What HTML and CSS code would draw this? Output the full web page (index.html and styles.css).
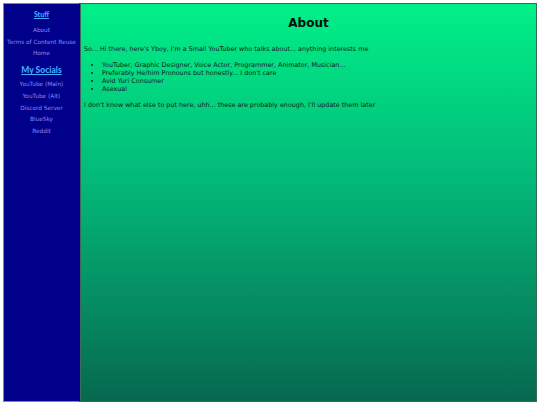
FILE: index.html
```html
<!DOCTYPE html>
<html>
<head>
<meta charset="utf-8">
<link rel="stylesheet" href="styles.css">
</head>
<body>
<div class="frame">
  <nav class="sidebar">
    <h3 class="side-head">Stuff</h3>
    <a class="side-link">About</a>
    <a class="side-link">Terms of Content Reuse</a>
    <a class="side-link">Home</a>
    <h3 class="side-head big">My Socials</h3>
    <a class="side-link">YouTube (Main)</a>
    <a class="side-link">YouTube (Alt)</a>
    <a class="side-link">Discord Server</a>
    <a class="side-link">BlueSky</a>
    <a class="side-link">Reddit</a>
  </nav>
  <main class="content">
    <h1 class="title">About</h1>
    <p class="para first">So... Hi there, here's Yboy, I'm a Small YouTuber who talks about... anything interests me</p>
    <ul class="list">
      <li>YouTuber, Graphic Designer, Voice Actor, Programmer, Animator, Musician...</li>
      <li>Preferably He/him Pronouns but honestly... I don't care</li>
      <li>Avid Yuri Consumer</li>
      <li>Asexual</li>
    </ul>
    <p class="para">I don't know what else to put here, uhh... these are probably enough, I'll update them later</p>
  </main>
</div>
</body>
</html>
```
FILE: styles.css
```css
html, body {
  margin: 0;
  padding: 0;
  background: #ffffff;
}
body {
  padding: 3px;
  font-family: "DejaVu Sans", "Lato", sans-serif;
}
.frame {
  display: flex;
  height: 399px;
}
.sidebar {
  width: 77px;
  box-sizing: border-box;
  background: #00008a;
  border: 1px solid #8080c8;
  border-right: 1px solid #05055a;
  display: flex;
  flex-direction: column;
  align-items: center;
  padding-top: 5px;
  overflow: hidden;
}
.side-head {
  margin: 0;
  font-family: "Lato", sans-serif;
  font-size: 7px;
  font-weight: 900;
  color: #3fa8ff;
  text-decoration: underline;
  line-height: 10px;
  margin-bottom: 6px;
}
.side-head.big {
  font-size: 8.5px;
  margin-top: 5px;
  margin-bottom: 4px;
}
.side-link {
  font-size: 5.8px;
  color: #8c8cf0;
  line-height: 11.7px;
  white-space: nowrap;
}
.content {
  flex: 1;
  box-sizing: border-box;
  border: 1px solid #3c6a5a;
  background: linear-gradient(#00f088, #03b878 45%, #07684f);
  padding: 11px 3px 0 3px;
  color: #14231a;
}
.title {
  margin: 0;
  text-align: center;
  font-size: 12px;
  font-weight: bold;
  line-height: 16px;
  color: #050d08;
}
.para {
  margin: 0;
  font-size: 6.4px;
  line-height: 8px;
}
.para.first {
  margin-top: 14px;
}
.list {
  margin: 8px 0 8px 0;
  padding-left: 18px;
  font-size: 6.4px;
  line-height: 8px;
}
```
